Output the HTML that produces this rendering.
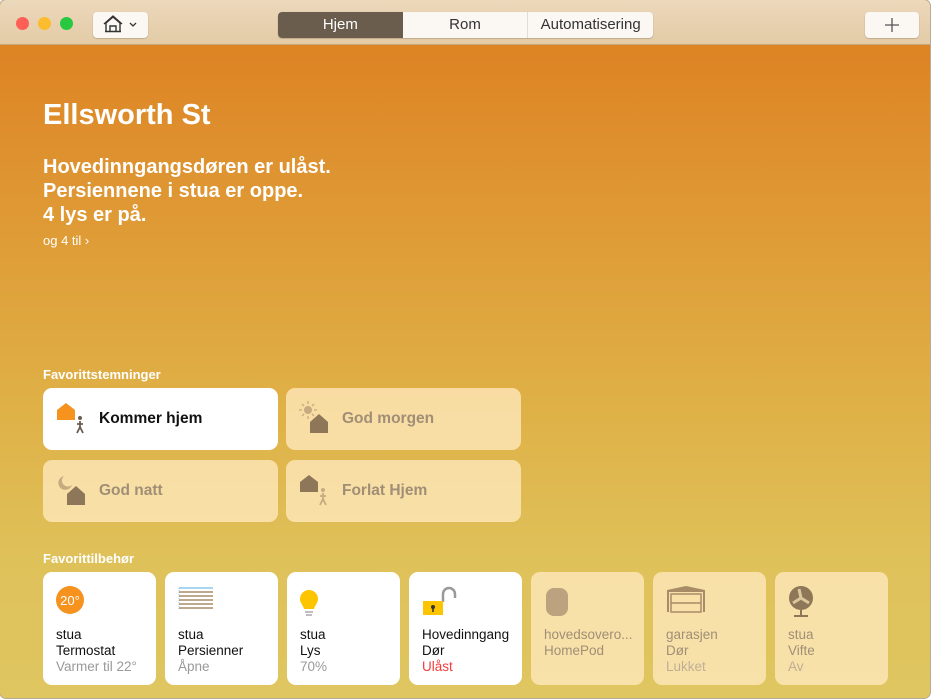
<!DOCTYPE html>
<html><head><meta charset="utf-8"><style>
*{margin:0;padding:0;box-sizing:border-box}
body{width:931px;height:700px;background:#fff;font-family:"Liberation Sans",sans-serif;overflow:hidden;position:relative}
.win{position:absolute;left:-1px;top:-1px;width:932px;height:700px;border-radius:7px;overflow:hidden;border:1px solid #b9ac96;
background:linear-gradient(180deg,#dd8324 45px,#df9a35 220px,#dfb046 400px,#dfc15a 560px,#dfc660 697px)}
.tb{position:absolute;left:0;top:0;width:100%;height:45px;background:linear-gradient(#ecd8bb,#e3cba6);border-bottom:1px solid #c9a97c}
.dot{position:absolute;top:17px;width:13px;height:13px;border-radius:50%}
.btn{position:absolute;background:#fbf8f3;border-radius:4px;box-shadow:0 0.5px 1px rgba(0,0,0,.3)}
.seg{position:absolute;left:277px;top:11px;width:375px;height:26px;display:flex;border-radius:4px;overflow:hidden;box-shadow:0 0.5px 1px rgba(0,0,0,.3);background:#fbf8f3}
.seg div{flex:1;text-align:center;font-size:15px;line-height:26px;color:#333;border-left:1px solid #ddd}
.seg div.on{background:#6b5d4e;color:#fff;border:none}
.h1{position:absolute;left:42px;top:98px;font-size:29px;font-weight:bold;color:#fff}
.st{position:absolute;left:42px;top:154px;font-size:20px;font-weight:bold;color:#fff;line-height:24px}
.more{position:absolute;left:42px;top:232px;font-size:13px;color:#fff}
.lbl{position:absolute;left:42px;font-size:13px;font-weight:bold;color:#fff}
.sc{position:absolute;width:235px;height:62px;border-radius:9px;background:rgba(255,233,190,.78);font-size:15.5px;font-weight:bold;color:#a08e76}
.sc span{position:absolute;left:56px;top:22px}
.sc.on{background:#fff;color:#111}
.sc svg{position:absolute;left:12px;top:12px}
.ac{position:absolute;top:571px;width:113px;height:113px;border-radius:9px;background:#fff;font-size:13.5px;line-height:16px;color:#111;padding:55px 0 0 13px;white-space:nowrap}
.ac.off{background:rgba(255,233,190,.78);color:#a08e76}
.ac .g{color:#999}
.ac.off .g{color:#bfae94}
.ac svg{position:absolute;left:12px;top:12px}
</style></head><body><div class="win">
<div class="tb">
<div class="dot" style="left:16px;background:#fd5f57"></div>
<div class="dot" style="left:38px;background:#fdbb2e"></div>
<div class="dot" style="left:60px;background:#28c840"></div>
<div class="btn" style="left:93px;top:12px;width:55px;height:26px">
<svg width="55" height="26"><path d="M13 19V11l7-6 7 6v8M11 12l9-8 9 8M17 19v-5h6v5M12 19.5h16" fill="none" stroke="#333" stroke-width="1.4"/><path d="M37 11l3 3 3-3" fill="none" stroke="#333" stroke-width="1.3"/></svg></div>
<div class="seg" style="left:278px;top:12px"><div class="on">Hjem</div><div style="border:none">Rom</div><div>Automatisering</div></div>
<div class="btn" style="left:865px;top:12px;width:54px;height:26px"><svg width="54" height="26"><path d="M27 6v14M20 13h14" stroke="#555" stroke-width="1.3"/></svg></div>
</div>
<div class="h1" style="left:43px;top:99px">Ellsworth St</div>
<div class="st" style="left:43px;top:155px">Hovedinngangsdøren er ulåst.<br>Persiennene i stua er oppe.<br>4 lys er på.</div>
<div class="more" style="left:43px;top:233px">og 4 til ›</div>
<div class="lbl" style="top:367px;left:43px">Favorittstemninger</div>
<div class="sc on" style="left:43px;top:388px"><svg width="36" height="36"><path d="M2 6l9-7 9 7v10H2z" transform="translate(0,4)" fill="#f6921e"/><circle cx="25" cy="18" r="2" fill="#6b5d4e"/><path d="M25 21v6l-3 6M25 27l3 6M22 24h6" stroke="#6b5d4e" stroke-width="1.8" fill="none"/></svg><span>Kommer hjem</span></div>
<div class="sc" style="left:286px;top:388px"><svg width="36" height="36"><circle cx="10" cy="10" r="4" fill="#c8aa80"/><path d="M10 1v3M10 16v3M1 10h3M16 10h3M4 4l2 2M14 14l2 2M16 4l-2 2M4 16l2-2" stroke="#c8aa80" stroke-width="1.3"/><path d="M12 22l9-8 9 8v11H12z" fill="#8e7759"/></svg><span>God morgen</span></div>
<div class="sc" style="left:43px;top:460px"><svg width="36" height="36"><path d="M9 4a7 7 0 1 0 8 9a6 6 0 0 1-8-9z" fill="#c8aa80"/><path d="M12 22l9-8 9 8v11H12z" fill="#8e7759"/></svg><span>God natt</span></div>
<div class="sc" style="left:286px;top:460px"><svg width="36" height="36"><path d="M2 10l9-7 9 7v10H2z" fill="#8e7759"/><circle cx="25" cy="18" r="2" fill="#c8aa80"/><path d="M25 21v6l-3 6M25 27l3 6M22 24h6" stroke="#c8aa80" stroke-width="1.8" fill="none"/></svg><span>Forlat Hjem</span></div>
<div class="lbl" style="top:551px;left:43px">Favorittilbehør</div>
<div class="ac" style="left:43px;top:572px"><svg width="32" height="32"><circle cx="15" cy="16" r="14" fill="#f6921e"/><text x="15" y="21" font-size="13" fill="#fff" text-anchor="middle" font-family="Liberation Sans">20°</text></svg>stua<br>Termostat<br><span class="g">Varmer til 22°</span></div>
<div class="ac" style="left:165px;top:572px"><svg width="40" height="32"><path d="M2 4v22" stroke="#8cc8e8" stroke-dasharray="1 1"/><path d="M2 4h34" stroke="#8cc8e8" stroke-width="1.5"/><path d="M2 8h34M2 12h34M2 16h34M2 20h34M2 24h34" stroke="#a88c68" stroke-width="1.4"/></svg>stua<br>Persienner<br><span class="g">Åpne</span></div>
<div class="ac" style="left:287px;top:572px"><svg width="32" height="34"><path d="M10 4a9 9 0 0 1 9 9c0 4-3 6-4 10h-10c-1-4-4-6-4-10a9 9 0 0 1 9-9z" transform="translate(0,2)" fill="#fcc500"/><path d="M6 28h8M7 31h6" stroke="#aaa" stroke-width="1.5"/></svg>stua<br>Lys<br><span class="g">70%</span></div>
<div class="ac" style="left:409px;top:572px"><svg width="40" height="36"><path d="M22 18V10a6 6 0 0 1 12 0v4" stroke="#999" stroke-width="2.5" fill="none"/><rect x="2" y="17" width="20" height="14" fill="#fcc500"/><circle cx="12" cy="23" r="2" fill="#333"/><path d="M12 24v4" stroke="#333" stroke-width="1.5"/></svg>Hovedinngang<br>Dør<br><span style="color:#f63c3c">Ulåst</span></div>
<div class="ac off" style="left:531px;top:572px"><svg width="32" height="36"><rect x="3" y="4" width="22" height="28" rx="8" fill="#bca27e"/></svg>hovedsovero...<br>HomePod</div>
<div class="ac off" style="left:653px;top:572px"><svg width="44" height="32"><path d="M2 6l19-4 19 4v22h-2V8H4v20H2z" fill="#a88c68"/><rect x="6" y="10" width="30" height="18" fill="none" stroke="#a88c68" stroke-width="1.5"/><path d="M6 19h30" stroke="#a88c68" stroke-width="1.5"/></svg>garasjen<br>Dør<br><span class="g">Lukket</span></div>
<div class="ac off" style="left:775px;top:572px"><svg width="32" height="36"><circle cx="14" cy="14" r="12" fill="#8e7759"/><path d="M14 14l-2-9M14 14l8 5M14 14l-8 5" stroke="#dcc69c" stroke-width="3"/><path d="M14 26v5M7 32h14" stroke="#8e7759" stroke-width="2"/></svg>stua<br>Vifte<br><span class="g">Av</span></div>
</div></body></html>
